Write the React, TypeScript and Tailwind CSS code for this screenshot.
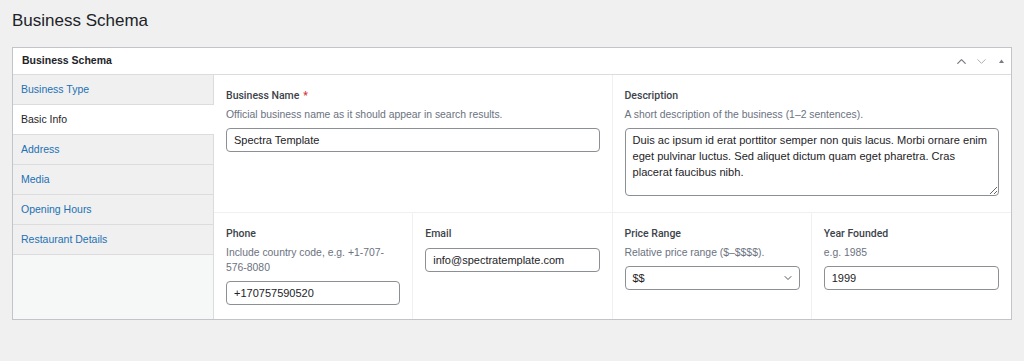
import { ChevronUp, ChevronDown } from "lucide-react"

const tabs = ["Business Type", "Basic Info", "Address", "Media", "Opening Hours", "Restaurant Details"]

function Label({ text, required }: { text: string; required?: boolean }) {
  return (
    <div className="font-['Roboto',Arial,sans-serif] text-[10.5px] font-medium leading-[16px] text-[#3c434a]">
      {text}
      {required && <span className="ml-[4px] text-[#d63638]">*</span>}
    </div>
  )
}

function Hint({ children }: { children: React.ReactNode }) {
  return <div className="mt-[3px] text-[10.4px] leading-[15px] text-[#6b7280]">{children}</div>
}

function Field({ value, className = "" }: { value: string; className?: string }) {
  return (
    <input
      readOnly
      value={value}
      className={`h-[24px] w-full rounded-[4px] border border-[#8c8f94] bg-white px-[7px] text-[11px] text-[#1d2327] outline-none ${className}`}
    />
  )
}

export default function App() {
  return (
    <div className="min-h-[361px] bg-[#f0f0f1] px-[12px] pt-[7px] font-['Liberation_Sans',Arial,sans-serif]">
      <h1 className="text-[17px] leading-[28px] text-[#1d2327]">Business Schema</h1>

      <div className="mt-[12px] border border-[#c3c4c7] bg-white">
        <div className="flex h-[27px] items-center justify-between border-b border-[#dcdcde] pl-[9px] pr-[2px]">
          <span className="text-[10.5px] font-bold text-[#1d2327]">Business Schema</span>
          <div className="flex items-center gap-[5px] text-[#787c82]">
            <ChevronUp className="h-[15px] w-[15px]" strokeWidth={2} />
            <ChevronDown className="h-[15px] w-[15px] text-[#a7aaad]" strokeWidth={1.5} />
            <svg width="15" height="15" viewBox="0 0 15 15">
              <path d="M5 9 L7.5 5.5 L10 9 Z" fill="#787c82" />
            </svg>
          </div>
        </div>

        <div className="flex">
          <div className="w-[201px] shrink-0 border-r border-[#dcdcde] bg-[#f6f7f7]">
            {tabs.map((t) => (
              <div
                key={t}
                className={`flex h-[30px] items-center border-b border-[#dcdcde] px-[8px] text-[10.5px] ${
                  t === "Basic Info" ? "-mr-px bg-white text-[#1d2327]" : "bg-[#f0f0f1] text-[#2271b1]"
                }`}
              >
                {t}
              </div>
            ))}
          </div>

          <div className="flex-1">
            <div className="grid h-[138px] grid-cols-2 border-b border-[#f0f0f1]">
              <div className="border-r border-[#f0f0f1] px-[12px] pt-[13px]">
                <Label text="Business Name" required />
                <Hint>Official business name as it should appear in search results.</Hint>
                <Field value="Spectra Template" className="mt-[6px]" />
              </div>
              <div className="px-[12px] pt-[13px]">
                <Label text="Description" />
                <Hint>A short description of the business (1–2 sentences).</Hint>
                <textarea
                  readOnly
                  value="Duis ac ipsum id erat porttitor semper non quis lacus. Morbi ornare enim eget pulvinar luctus. Sed aliquet dictum quam eget pharetra. Cras placerat faucibus nibh."
                  className="mt-[6px] block h-[68px] w-full resize-y rounded-[4px] border border-[#8c8f94] bg-white px-[7px] py-[3px] text-[11.1px] leading-[16px] text-[#1d2327] outline-none"
                />
              </div>
            </div>

            <div className="grid h-[106px] grid-cols-4">
              <div className="border-r border-[#f0f0f1] px-[12px] pt-[13px]">
                <Label text="Phone" />
                <Hint>Include country code, e.g. +1-707-576-8080</Hint>
                <Field value="+170757590520" className="mt-[6px] w-[175px]" />
              </div>
              <div className="border-r border-[#f0f0f1] px-[12px] pt-[13px]">
                <Label text="Email" />
                <Field value="info@spectratemplate.com" className="mt-[6px] w-[175px]" />
              </div>
              <div className="border-r border-[#f0f0f1] px-[12px] pt-[13px]">
                <Label text="Price Range" />
                <Hint>Relative price range ($–$$$$).</Hint>
                <div className="relative mt-[6px] w-[175px]">
                  <div className="flex h-[24px] items-center rounded-[4px] border border-[#8c8f94] bg-white px-[7px] text-[11px] text-[#1d2327]">
                    $$
                  </div>
                  <ChevronDown className="absolute right-[6px] top-[6px] h-[12px] w-[12px] text-[#50575e]" strokeWidth={2} />
                </div>
              </div>
              <div className="px-[12px] pt-[13px]">
                <Label text="Year Founded" />
                <Hint>e.g. 1985</Hint>
                <Field value="1999" className="mt-[6px] w-[175px]" />
              </div>
            </div>
          </div>
        </div>
      </div>
    </div>
  )
}
